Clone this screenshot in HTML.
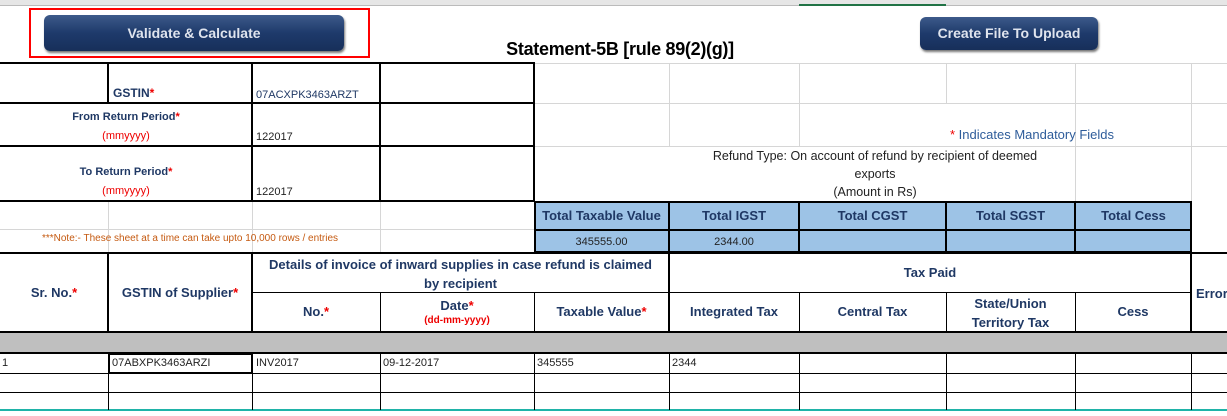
<!DOCTYPE html>
<html><head><meta charset="utf-8"><style>
body{margin:0;width:1227px;height:416px;overflow:hidden;background:#fff;position:relative;font-family:"Liberation Sans Narrow","Liberation Sans",sans-serif;}
div{position:absolute;box-sizing:border-box;}
.h{height:1px;background:#d6d6d6}
.v{width:1px;background:#d6d6d6}
.H{height:2px;background:#000}
.V{width:2px;background:#000}
.hb{height:1px;background:#000}
.vb{width:1px;background:#000}
.c{display:flex;align-items:center;justify-content:center;text-align:center;line-height:1.3}
.b{font-weight:bold;color:#1f3864}
.r{color:#e00}
.btn{background:linear-gradient(#3d5a8a,#1e3a6b 50%,#172f5a);border-radius:6px;color:#dfe4ee;font-weight:bold;font-size:14px;box-shadow:1px 2px 2px #777;}
.t{font-size:11px;color:#222}
</style></head><body>
<div style="left:0;top:0;width:1227px;height:6px;background:#e6e6e6;border-bottom:1px solid #bbb"></div>
<div style="left:799px;top:4px;width:147px;height:2px;background:#217346"></div>
<div class="h" style="left:534px;top:63px;width:693px"></div>
<div class="h" style="left:534px;top:103px;width:693px"></div>
<div class="h" style="left:534px;top:146px;width:693px"></div>
<div class="h" style="left:0;top:229px;width:534px"></div>
<div class="v" style="left:669px;top:63px;height:83px"></div>
<div class="v" style="left:799px;top:63px;height:83px"></div>
<div class="v" style="left:946px;top:63px;height:40px"></div>
<div class="v" style="left:1075px;top:63px;height:138px"></div>
<div class="v" style="left:1191px;top:63px;height:190px"></div>
<div class="v" style="left:108px;top:201px;height:52px"></div>
<div class="v" style="left:252px;top:201px;height:52px"></div>
<div class="v" style="left:380px;top:201px;height:52px"></div>
<div class="H" style="left:0;top:62px;width:535px"></div>
<div class="H" style="left:0;top:102px;width:535px"></div>
<div class="H" style="left:0;top:145px;width:535px"></div>
<div class="H" style="left:0;top:200px;width:535px"></div>
<div class="V" style="left:107px;top:62px;height:41px"></div>
<div class="V" style="left:251px;top:62px;height:139px"></div>
<div class="V" style="left:379px;top:62px;height:139px"></div>
<div class="V" style="left:533px;top:62px;height:139px"></div>
<div style="left:29px;top:8px;width:341px;height:50px;border:2px solid #f00"></div>
<div class="btn c" style="left:44px;top:15px;width:300px;height:36px">Validate &amp; Calculate</div>
<div class="btn c" style="left:920px;top:17px;width:178px;height:33px">Create File To Upload</div>
<div class="c" style="left:460px;top:38px;width:320px;height:24px;font-size:18px;font-weight:bold;font-family:'Liberation Sans',sans-serif;letter-spacing:-0.3px">Statement-5B [rule 89(2)(g)]</div>
<div class="b" style="left:113px;top:86px;font-size:12px">GSTIN<span class="r">*</span></div>
<div style="left:256px;top:89px;font-size:11px;color:#1f3864">07ACXPK3463ARZT</div>
<div class="c b" style="left:0;top:108px;width:252px;font-size:11px;flex-direction:column;line-height:19px"><span>From Return Period<span class="r">*</span></span><span class="r" style="font-weight:normal">(mmyyyy)</span></div>
<div class="c b" style="left:0;top:163px;width:252px;font-size:11px;flex-direction:column;line-height:19px"><span>To Return Period<span class="r">*</span></span><span class="r" style="font-weight:normal">(mmyyyy)</span></div>
<div class="t" style="left:256px;top:131px">122017</div>
<div class="t" style="left:256px;top:186px">122017</div>
<div style="left:0;top:233px;width:380px;text-align:center;font-size:10px;color:#c55a11">***Note:- These sheet at a time can take upto 10,000 rows / entries</div>
<div style="left:950px;top:127px;font-size:13px;color:#2e5c9a;font-family:'Liberation Sans',sans-serif"><span class="r">*</span> Indicates Mandatory Fields</div>
<div class="c" style="left:650px;top:147px;width:450px;font-size:12.5px;color:#222;flex-direction:column;line-height:18px"><span>Refund Type: On account of refund by recipient of deemed</span><span>exports</span><span>(Amount in Rs)</span></div>
<div style="left:534px;top:201px;width:658px;height:52px;background:#9dc3e6;border:2px solid #000"></div>
<div class="H" style="left:534px;top:229px;width:658px"></div>
<div class="V" style="left:668px;top:201px;height:52px"></div>
<div class="V" style="left:798px;top:201px;height:52px"></div>
<div class="V" style="left:945px;top:201px;height:52px"></div>
<div class="V" style="left:1074px;top:201px;height:52px"></div>
<div class="c b" style="left:534px;top:203px;width:135px;height:26px;font-size:13px;color:#1f3864">Total Taxable Value</div>
<div class="c b" style="left:669px;top:203px;width:130px;height:26px;font-size:13px">Total IGST</div>
<div class="c b" style="left:799px;top:203px;width:147px;height:26px;font-size:13px">Total CGST</div>
<div class="c b" style="left:946px;top:203px;width:129px;height:26px;font-size:13px">Total SGST</div>
<div class="c b" style="left:1075px;top:203px;width:117px;height:26px;font-size:13px">Total Cess</div>
<div class="c" style="left:534px;top:231px;width:135px;height:22px;font-size:11px;color:#222">345555.00</div>
<div class="c" style="left:669px;top:231px;width:130px;height:22px;font-size:11px;color:#222">2344.00</div>
<div class="H" style="left:0;top:252px;width:1227px"></div>
<div class="H" style="left:0;top:331px;width:1227px"></div>
<div class="hb" style="left:252px;top:292px;width:940px"></div>
<div class="V" style="left:107px;top:252px;height:81px"></div>
<div class="V" style="left:251px;top:252px;height:81px"></div>
<div class="V" style="left:668px;top:252px;height:81px"></div>
<div class="V" style="left:1190px;top:252px;height:81px"></div>
<div class="vb" style="left:380px;top:292px;height:40px"></div>
<div class="vb" style="left:534px;top:292px;height:40px"></div>
<div class="vb" style="left:799px;top:292px;height:40px"></div>
<div class="vb" style="left:946px;top:292px;height:40px"></div>
<div class="vb" style="left:1075px;top:292px;height:40px"></div>
<div class="c b" style="left:0;top:254px;width:108px;height:78px;font-size:13px">Sr. No.<span class="r">*</span></div>
<div class="c b" style="left:108px;top:254px;width:144px;height:78px;font-size:13px">GSTIN of Supplier<span class="r">*</span></div>
<div class="c b" style="left:252px;top:254px;width:417px;height:39px;font-size:13px;line-height:19px">Details of invoice of inward supplies in case refund is claimed<br>by recipient</div>
<div class="c b" style="left:669px;top:254px;width:522px;height:39px;font-size:13px">Tax Paid</div>
<div class="b" style="left:1196px;top:286px;font-size:13px">Error</div>
<div class="c b" style="left:252px;top:293px;width:128px;height:39px;font-size:13px">No.<span class="r">*</span></div>
<div class="c b" style="left:380px;top:293px;width:154px;height:39px;font-size:13px;flex-direction:column;line-height:15px"><span>Date<span class="r">*</span></span><span class="r" style="font-size:10px">(dd-mm-yyyy)</span></div>
<div class="c b" style="left:534px;top:293px;width:135px;height:39px;font-size:13px">Taxable Value<span class="r">*</span></div>
<div class="c b" style="left:669px;top:293px;width:130px;height:39px;font-size:13px">Integrated Tax</div>
<div class="c b" style="left:799px;top:293px;width:147px;height:39px;font-size:13px">Central Tax</div>
<div class="c b" style="left:946px;top:293px;width:129px;height:39px;font-size:13px;line-height:19px">State/Union<br>Territory Tax</div>
<div class="c b" style="left:1075px;top:293px;width:116px;height:39px;font-size:13px">Cess</div>
<div style="left:0;top:333px;width:1227px;height:19px;background:#bfbfbf"></div>
<div class="H" style="left:0;top:352px;width:1227px"></div>
<div class="hb" style="left:0;top:373px;width:1227px"></div>
<div class="hb" style="left:0;top:392px;width:1227px"></div>
<div style="left:0;top:409px;width:1227px;height:7px;background:#fff;border-top:2px solid #1fb3a8"></div>
<div class="vb" style="left:108px;top:353px;height:57px"></div>
<div class="vb" style="left:252px;top:353px;height:57px"></div>
<div class="vb" style="left:380px;top:353px;height:57px"></div>
<div class="vb" style="left:534px;top:353px;height:57px"></div>
<div class="vb" style="left:669px;top:353px;height:57px"></div>
<div class="vb" style="left:799px;top:353px;height:57px"></div>
<div class="vb" style="left:946px;top:353px;height:57px"></div>
<div class="vb" style="left:1075px;top:353px;height:57px"></div>
<div class="vb" style="left:1191px;top:353px;height:57px"></div>
<div style="left:108px;top:353px;width:145px;height:21px;border:2px solid #000"></div>
<div class="t" style="left:2px;top:357px">1</div>
<div class="t" style="left:112px;top:357px">07ABXPK3463ARZI</div>
<div class="t" style="left:256px;top:357px">INV2017</div>
<div class="t" style="left:383px;top:357px">09-12-2017</div>
<div class="t" style="left:537px;top:357px">345555</div>
<div class="t" style="left:672px;top:357px">2344</div>
</body></html>
